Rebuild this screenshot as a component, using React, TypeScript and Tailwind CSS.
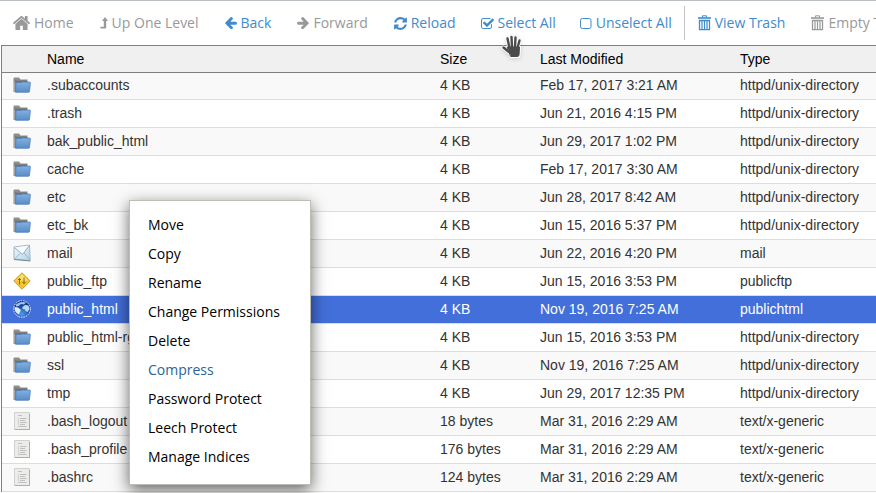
import type { ReactNode } from 'react';

type Kind = 'folder' | 'mail' | 'ftp' | 'globe' | 'file';

interface Entry {
  name: string;
  size: string;
  modified: string;
  type: string;
  kind: Kind;
  selected?: boolean;
}

const DIR = 'httpd/unix-directory';
const TEXT = 'text/x-generic';

const entries: Entry[] = [
  { name: '.subaccounts', size: '4 KB', modified: 'Feb 17, 2017 3:21 AM', type: DIR, kind: 'folder' },
  { name: '.trash', size: '4 KB', modified: 'Jun 21, 2016 4:15 PM', type: DIR, kind: 'folder' },
  { name: 'bak_public_html', size: '4 KB', modified: 'Jun 29, 2017 1:02 PM', type: DIR, kind: 'folder' },
  { name: 'cache', size: '4 KB', modified: 'Feb 17, 2017 3:30 AM', type: DIR, kind: 'folder' },
  { name: 'etc', size: '4 KB', modified: 'Jun 28, 2017 8:42 AM', type: DIR, kind: 'folder' },
  { name: 'etc_bk', size: '4 KB', modified: 'Jun 15, 2016 5:37 PM', type: DIR, kind: 'folder' },
  { name: 'mail', size: '4 KB', modified: 'Jun 22, 2016 4:20 PM', type: 'mail', kind: 'mail' },
  { name: 'public_ftp', size: '4 KB', modified: 'Jun 15, 2016 3:53 PM', type: 'publicftp', kind: 'ftp' },
  { name: 'public_html', size: '4 KB', modified: 'Nov 19, 2016 7:25 AM', type: 'publichtml', kind: 'globe', selected: true },
  { name: 'public_html-rg', size: '4 KB', modified: 'Jun 15, 2016 3:53 PM', type: DIR, kind: 'folder' },
  { name: 'ssl', size: '4 KB', modified: 'Nov 19, 2016 7:25 AM', type: DIR, kind: 'folder' },
  { name: 'tmp', size: '4 KB', modified: 'Jun 29, 2017 12:35 PM', type: DIR, kind: 'folder' },
  { name: '.bash_logout', size: '18 bytes', modified: 'Mar 31, 2016 2:29 AM', type: TEXT, kind: 'file' },
  { name: '.bash_profile', size: '176 bytes', modified: 'Mar 31, 2016 2:29 AM', type: TEXT, kind: 'file' },
  { name: '.bashrc', size: '124 bytes', modified: 'Mar 31, 2016 2:29 AM', type: TEXT, kind: 'file' },
];

const menuItems = [
  'Move',
  'Copy',
  'Rename',
  'Change Permissions',
  'Delete',
  'Compress',
  'Password Protect',
  'Leech Protect',
  'Manage Indices',
];

function HomeIcon() {
  return (
    <svg className="h-[14px] w-[17px] shrink-0" viewBox="90 250 1612 1290" preserveAspectRatio="none" fill="currentColor" aria-hidden="true">
      <path d="M1472 992v480q0 26-19 45t-45 19h-384v-384h-256v384h-384q-26 0-45-19t-19-45v-480q0-1 .5-3t.5-3l575-474 575 474q1 2 1 6zm223-69l-62 74q-8 9-21 11h-3q-13 0-21-7l-692-577-692 577q-12 8-24 7-13-2-21-11l-62-74q-8-10-7-23.500t11-21.500l719-599q32-26 76-26t76 26l244 204v-195q0-14 9-23t23-9h192q14 0 23 9t9 23v408l219 182q10 8 11 21.500t-7 23.500z" />
    </svg>
  );
}

function UpIcon() {
  return (
    <svg className="h-3 w-2 shrink-0" viewBox="0 0 8 12" fill="currentColor" aria-hidden="true">
      <path d="M5 0 8 4H6.200V10.500Q6.200 11.500 5.200 11.500H.8L0 9.700H3.800V4H2Z" />
    </svg>
  );
}

const ARROW =
  'M1536 896v128q0 53-32.500 90.500t-84.500 37.500h-704l293 294q38 36 38 90t-38 90l-75 76q-37 37-90 37-52 0-91-37l-651-652q-37-37-37-90 0-52 37-91l651-650q38-38 91-38 52 0 90 38l75 74q38 38 38 91t-38 91l-293 293h704q52 0 84.500 37.500t32.500 90.500z';

function BackIcon() {
  return (
    <svg className="size-3 shrink-0" viewBox="64 181 1472 1522" fill="currentColor" aria-hidden="true">
      <path d={ARROW} />
    </svg>
  );
}

function ForwardIcon() {
  return (
    <svg className="size-3 shrink-0" viewBox="64 181 1472 1522" fill="currentColor" aria-hidden="true">
      <path transform="translate(1600 0) scale(-1 1)" d={ARROW} />
    </svg>
  );
}

function ReloadIcon() {
  return (
    <svg className="size-[13px] shrink-0" viewBox="120 120 1552 1552" fill="currentColor" aria-hidden="true">
      <path d="M1639 1056q0 5-1 7-64 268-268 434.500t-478 166.500q-146 0-282.500-55t-243.500-157l-129 129q-19 19-45 19t-45-19-19-45v-448q0-26 19-45t45-19h448q26 0 45 19t19 45-19 45l-137 137q71 66 161 102t187 36q134 0 250-65t186-179q11-17 53-117 8-23 30-23h192q13 0 22.500 9.500t9.500 22.500zm25-800v448q0 26-19 45t-45 19h-448q-26 0-45-19t-19-45 19-45l138-138q-148-137-349-137-134 0-250 65t-186 179q-11 17-53 117-8 23-30 23h-199q-13 0-22.500-9.500t-9.500-22.500v-7q65-268 270-434.500t480-166.500q146 0 284 55.500t245 156.500l130-129q19-19 45-19t45 19 19 45z" />
    </svg>
  );
}

function CheckedIcon() {
  return (
    <svg className="h-[11px] w-[13px] shrink-0" viewBox="64 128 1663 1408" fill="currentColor" aria-hidden="true">
      <path d="M1472 930v318q0 119-84.500 203.500t-203.500 84.500h-832q-119 0-203.500-84.500t-84.500-203.500v-832q0-119 84.500-203.500t203.500-84.500h832q63 0 117 25 15 7 18 23 3 17-9 29l-49 49q-10 10-23 10-3 0-9-2-23-6-45-6h-832q-66 0-113 47t-47 113v832q0 66 47 113t113 47h832q66 0 113-47t47-113v-254q0-13 9-22l64-64q10-10 23-10 6 0 12 3 20 8 20 29zm231-489l-814 814q-24 24-57 24t-57-24l-430-430q-24-24-24-57t24-57l110-110q24-24 57-24t57 24l263 263 647-647q24-24 57-24t57 24l110 110q24 24 24 57t-24 57z" />
    </svg>
  );
}

function UncheckedIcon() {
  return (
    <svg className="h-[11px] w-3 shrink-0" viewBox="0 0 12 11" fill="none" stroke="currentColor" aria-hidden="true">
      <rect x=".5" y=".5" width="10.500" height="10" rx="1.800" />
    </svg>
  );
}

function TrashIcon() {
  return (
    <svg className="h-4 w-[13px] shrink-0" viewBox="0 0 13 16" fill="none" stroke="currentColor" aria-hidden="true">
      <path d="M4.500 2.500V.8H8.500V2.500" />
      <path d="M0 3H13" strokeWidth="1.600" />
      <path d="M1.500 5.500H11.500V14.700H1.500Z" strokeWidth="1.300" />
      <path d="M4 6V14M6.500 6V14M9 6V14" strokeWidth="1.200" />
    </svg>
  );
}

function FolderIcon() {
  return (
    <svg className="h-4 w-[18px]" viewBox="0 0 18 16" aria-hidden="true">
      <defs>
        <linearGradient id="folderFront" x1="0" y1="0" x2="0" y2="1">
          <stop offset="0" stopColor="#86b0de" />
          <stop offset="1" stopColor="#568dca" />
        </linearGradient>
      </defs>
      <path d="M.5 1.500Q.5.500 1.500.5H6L7.500 2.500H14.500V12L2.500 15H.5Z" fill="#8d8d89" />
      <path d="M1 3.500H14V6H1Z" fill="#757572" />
      <path d="M1.500 14.500V4.500" stroke="#a5a5a2" />
      <path d="M3 6.500Q3 5.500 4 5.500H8L9 5H16.500Q17.500 5 17.400 6L16.500 14.500Q16.400 15.300 15.500 15.300H2.500Z" fill="url(#folderFront)" stroke="#4479b5" strokeWidth=".7" />
    </svg>
  );
}

function MailIcon() {
  return (
    <svg className="h-[18px] w-[18px]" viewBox="0 0 18 18" aria-hidden="true">
      <defs>
        <linearGradient id="mailBody" x1="0" y1="0" x2="1" y2="1">
          <stop offset="0" stopColor="#f2f8fc" />
          <stop offset="1" stopColor="#b5d2e8" />
        </linearGradient>
      </defs>
      <path d="M1 3 16.500 1 17.200 16.500 1 15Z" fill="url(#mailBody)" stroke="#a5b5c2" />
      <path d="M2 14.500 7 9.500M16.500 15.500 11 8.800" stroke="#94b5cf" />
      <path d="M1.500 3.500 9.500 10.500 16.300 1.500" fill="#f7fbfe" stroke="#91adc3" />
      <path d="M1 15.500 17.300 17" stroke="#72899b" />
    </svg>
  );
}

function FtpIcon() {
  return (
    <svg className="h-[18px] w-[18px]" viewBox="0 0 18 18" aria-hidden="true">
      <path d="M9 .8 17.200 9 9 17.200.8 9Z" fill="#f5c62c" stroke="#cf9a22" strokeLinejoin="round" />
      <path d="M9 2.200 3 8.500H15Z" fill="#fbe070" />
      <path d="M6.500 12.500V6.500M5 8 6.500 6.300 8 8M11 5.500V11.500M9.500 10 11 11.700 12.500 10" fill="none" stroke="#8a6420" />
    </svg>
  );
}

function GlobeIcon() {
  return (
    <svg className="h-[18px] w-[18px]" viewBox="0 0 18 18" aria-hidden="true">
      <defs>
        <radialGradient id="globeSea" cx=".5" cy=".8" r=".8">
          <stop offset="0" stopColor="#4f9bf0" />
          <stop offset=".5" stopColor="#1f56ae" />
          <stop offset="1" stopColor="#0c2a66" />
        </radialGradient>
      </defs>
      <circle cx="9" cy="9" r="8.300" fill="url(#globeSea)" stroke="#eef3fb" strokeDasharray="1.500 1" />
      <path d="M3 4.500Q6 1.500 10 2L13 2.500 11 4.500 8 4 5.500 6 3 6.500Z" fill="#9cc4f2" />
      <path d="M1.500 7 5 7.500 8 10 7 12 6 14.500Q2 12.500 1.500 9Z" fill="#dcecfc" />
      <path d="M9.500 7 12 5 15.500 5.500 16.500 9 14.500 12 12.500 11 12 9.500 9.500 9Z" fill="#b9d8f8" />
    </svg>
  );
}

function FileIcon() {
  return (
    <svg className="h-[18px] w-4" viewBox="0 0 16 18" aria-hidden="true">
      <path d="M.5.500H15.500V17.500H.5Z" fill="#ececea" stroke="#d0d0ce" />
      <path d="M1 17.500H15.500V2" fill="none" stroke="#adadab" />
      <path d="M4 3.500H8M6 6.500H12.500M6 8.500H11M6 10.500H12.500M6 12.500H11M5 14.500H12.500" stroke="#c0c0be" />
      <path d="M4.500 6V15" stroke="#d3d3d1" />
    </svg>
  );
}

const kindIcons: Record<Kind, ReactNode> = {
  folder: <FolderIcon />,
  mail: <MailIcon />,
  ftp: <FtpIcon />,
  globe: <GlobeIcon />,
  file: <FileIcon />,
};

function HandCursor() {
  const fingers = 'M8.500 13 6.500 3.500M11 12 10.500 2M14 12 14.500 2.500M16.500 13 18.500 5.500M8 17 2.500 12.500';
  const palm = 'M6.500 12H18.500L18 20Q17.800 21.500 16.500 21.500H10Z';
  return (
    <svg
      className="pointer-events-none absolute top-[35px] left-[501px] h-6 w-[22px] drop-shadow-sm"
      viewBox="0 0 22 24"
      strokeLinecap="round"
      strokeLinejoin="round"
      aria-hidden="true"
    >
      <path d={fingers} fill="none" stroke="#fff" strokeWidth="4" />
      <path d={palm} fill="#fff" stroke="#fff" strokeWidth="3" />
      <path d={fingers} fill="none" stroke="#4b4b4b" strokeWidth="2.400" />
      <path d={palm} fill="#4b4b4b" stroke="#4b4b4b" />
    </svg>
  );
}

function ToolButton({ icon, label, disabled = false }: { icon: ReactNode; label: string; disabled?: boolean }) {
  return (
    <button
      type="button"
      disabled={disabled}
      className="flex h-full shrink-0 items-center gap-1 whitespace-nowrap text-[#428bca] disabled:text-[#999999]"
    >
      {icon}
      <span>{label}</span>
    </button>
  );
}

function Toolbar() {
  return (
    <div role="toolbar" className="flex h-[45px] items-center overflow-hidden border-t border-[#b9bec3] bg-white font-['Open_Sans',sans-serif] text-sm">
      <div className="flex h-full shrink-0 *:px-[13px]">
        <ToolButton icon={<HomeIcon />} label="Home" disabled />
        <ToolButton icon={<UpIcon />} label="Up One Level" disabled />
        <ToolButton icon={<BackIcon />} label="Back" />
        <ToolButton icon={<ForwardIcon />} label="Forward" disabled />
        <ToolButton icon={<ReloadIcon />} label="Reload" />
      </div>
      <div className="flex h-full shrink-0 *:px-3">
        <ToolButton icon={<CheckedIcon />} label="Select All" />
        <ToolButton icon={<UncheckedIcon />} label="Unselect All" />
      </div>
      <div className="h-[34px] w-px shrink-0 bg-[#c4c4c4]" />
      <div className="flex h-full shrink-0 *:px-[13px]">
        <ToolButton icon={<TrashIcon />} label="View Trash" />
        <ToolButton icon={<TrashIcon />} label="Empty Trash" disabled />
      </div>
    </div>
  );
}

function FileTable() {
  return (
    <table className="w-full table-fixed border-separate border-spacing-0 text-left text-sm leading-5 text-[#333333]">
      <colgroup>
        <col className="w-[45px]" />
        <col className="w-[393px]" />
        <col className="w-[100px]" />
        <col className="w-[200px]" />
        <col />
      </colgroup>
      <thead>
        <tr className="h-7 bg-[#f0f0f0] text-black *:border-y *:border-[#7f7f7f] *:p-0 *:font-normal">
          <th aria-label="Icon" />
          <th>Name</th>
          <th>Size</th>
          <th>Last Modified</th>
          <th>Type</th>
        </tr>
      </thead>
      <tbody>
        {entries.map((entry) => (
          <tr
            key={entry.name}
            className={
              'h-7 whitespace-nowrap *:border-b *:border-[#dddddd] *:p-0 *:pb-px first:h-[27px] first:*:pb-[3px] ' +
              (entry.selected ? 'bg-[#426fd9] text-white' : 'odd:bg-[#f9f9f9] even:bg-white')
            }
          >
            <td>
              <div className="flex w-10 items-center justify-center">{kindIcons[entry.kind]}</div>
            </td>
            <td>{entry.name}</td>
            <td>{entry.size}</td>
            <td>{entry.modified}</td>
            <td>{entry.type}</td>
          </tr>
        ))}
      </tbody>
    </table>
  );
}

function ContextMenu() {
  return (
    <div
      role="menu"
      className="absolute top-[200px] left-[129px] flex w-[182px] flex-col border border-[#bdbdb4] bg-white pt-[9px] pb-[13px] font-['Open_Sans',sans-serif] text-sm text-black shadow-[0_5px_15px_rgba(0,0,0,0.6)]"
    >
      {menuItems.map((item) => (
        <button
          key={item}
          type="button"
          role="menuitem"
          className={'h-[29px] px-[18px] text-left whitespace-nowrap ' + (item === 'Compress' ? 'text-[#2a6496]' : '')}
        >
          {item}
        </button>
      ))}
    </div>
  );
}

export default function App() {
  return (
    <main className="relative h-screen overflow-hidden bg-white font-['Liberation_Sans',Arial,sans-serif]">
      <Toolbar />
      <div className="ml-px border-l border-[#7f7f7f]">
        <FileTable />
      </div>
      <HandCursor />
      <ContextMenu />
    </main>
  );
}
